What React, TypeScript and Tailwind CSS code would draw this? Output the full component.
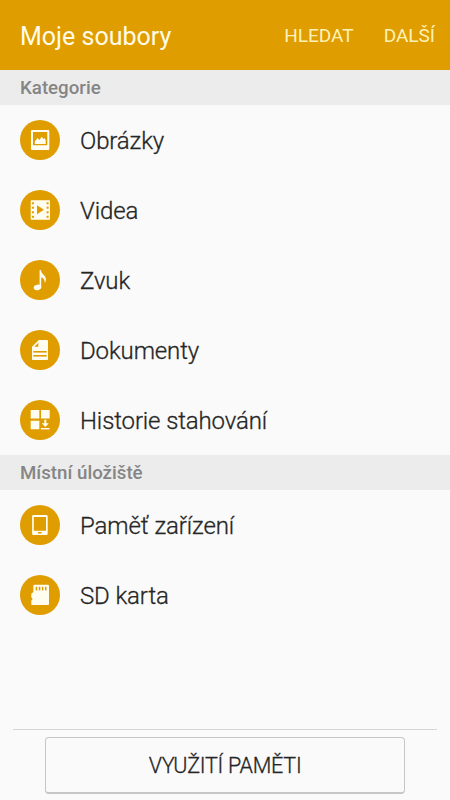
import type { ReactNode } from "react";

type Item = {
  label: string;
  icon: ReactNode;
};

const ORANGE = "#df9d00";

const categories: Item[] = [
  {
    label: "Obrázky",
    icon: (
      <>
        <path
          fillRule="evenodd"
          d="M12 10h16.3q1 0 1 1v18q0 1-1 1H12q-1 0-1-1V11q0-1 1-1zM13 12v13.2h14.3V12z"
        />
        <path d="M14.8 24v-2.5l2.8-3.4 1.8 1.9 2.3-3.2 1.7 2.2.9-1 1.4 2V24z" />
      </>
    ),
  },
  {
    label: "Videa",
    icon: (
      <>
        <rect x="10.7" y="10.3" width="19.3" height="19.4" rx=".8" />
        <g fill={ORANGE}>
          <path d="M17 15.3v9l7-4.5z" />
          {[12.3, 16.7, 21.3, 25.8].map((y) => (
            <g key={y}>
              <rect x="11.9" y={y} width="2" height="2" />
              <rect x="26.6" y={y} width="2" height="2" />
            </g>
          ))}
        </g>
      </>
    ),
  },
  {
    label: "Zvuk",
    icon: (
      <>
        <ellipse cx="17.5" cy="27.4" rx="3.8" ry="2.8" transform="rotate(-12 17.5 27.4)" />
        <path d="M19.6 10h1.3c.3 3 2.3 4.1 3.8 6 1.8 2.3 1.6 5-.1 7.3.6-3-.6-5.1-3.4-6.1v10.2h-1.6z" />
      </>
    ),
  },
  {
    label: "Dokumenty",
    icon: (
      <>
        <path d="M18.8 10H27q1 0 1 1v18q0 1-1 1H13q-1 0-1-1V16.8z" />
        <g fill={ORANGE}>
          <path d="M18.3 12.7v4h-4z" />
          <rect x="13.3" y="21" width="13.4" height="1.6" />
          <rect x="13.3" y="25" width="13.4" height="1.6" />
        </g>
      </>
    ),
  },
  {
    label: "Historie stahování",
    icon: (
      <>
        <rect x="10.7" y="10" width="8.6" height="8.5" rx=".6" />
        <rect x="21" y="10" width="8.7" height="8.5" rx=".6" />
        <rect x="10.7" y="20.7" width="8.6" height="8.6" rx=".6" />
        <path d="M24.3 19.8h2v3.4h2.5L25.3 27l-3.5-3.8h2.5z" />
        <rect x="20.9" y="28" width="8.7" height="1.4" />
      </>
    ),
  },
];

const storage: Item[] = [
  {
    label: "Paměť zařízení",
    icon: (
      <path
        fillRule="evenodd"
        d="M13.4 10h13q1.3 0 1.3 1.3v17.4q0 1.3-1.3 1.3h-13q-1.3 0-1.3-1.3V11.3q0-1.3 1.3-1.3zM13.8 12v13.8h12.2V12zM18 27v1.6h3.7V27z"
      />
    ),
  },
  {
    label: "SD karta",
    icon: (
      <>
        <path d="M14.6 9.8h13.4q1 0 1 1v18.2q0 1-1 1H12.3q-1 0-1-1v-3.5l1-.8v-1.5l-1-.6v-3.8l2.1-1.8v-6.2q0-1 1.2-1z" />
        <g fill={ORANGE}>
          <rect x="15.7" y="11.8" width="1.5" height="3.6" />
          <rect x="18.8" y="11.8" width="1.5" height="3.6" />
          <rect x="21.9" y="11.8" width="1.5" height="3.6" />
          <rect x="25" y="11.8" width="1.5" height="3.6" />
        </g>
      </>
    ),
  },
];

function Section({ title, items }: { title: string; items: Item[] }) {
  return (
    <section>
      <h2 className="h-[35px] bg-[#ececec] pl-5 text-[18.7px] font-medium leading-[36px] text-[#858585]">
        {title}
      </h2>
      <ul>
        {items.map((item) => (
          <li key={item.label} className="flex h-[70px] items-center gap-5 pl-5">
            <svg viewBox="0 0 40 40" className="size-10 shrink-0" fill="#fffdf0">
              <circle cx="20" cy="20" r="20" fill={ORANGE} />
              {item.icon}
            </svg>
            <span className="whitespace-nowrap pt-px text-[24px] font-light tracking-[-0.12px] text-[#262626] [-webkit-text-stroke:0.3px_#262626]">
              {item.label}
            </span>
          </li>
        ))}
      </ul>
    </section>
  );
}

export default function App() {
  return (
    <main className="flex h-[800px] w-[450px] flex-col overflow-hidden bg-[#fafafa] font-[Roboto,sans-serif]">
      <header className="flex h-[70px] shrink-0 items-center bg-[#df9d00] pl-5 pr-[15px]">
        <h1 className="flex-1 pt-[3px] text-[25px] text-[#fffbe6]">Moje soubory</h1>
        <nav className="flex gap-[30px] pt-[2px] text-[19px] text-[#fff2b8]">
          <button>HLEDAT</button>
          <button>DALŠÍ</button>
        </nav>
      </header>

      <Section title="Kategorie" items={categories} />
      <Section title="Místní úložiště" items={storage} />

      {/* Bottom action */}
      <footer className="mx-[13px] mt-auto h-[71px] border-t border-[#d6d6d6] px-8 pt-[7px]">
        <button className="h-[57px] w-full rounded-[4px] border border-b-2 border-[#c6c6c6] pt-[2px] text-[21.5px] font-light tracking-[-0.25px] text-[#262626] [-webkit-text-stroke:0.3px_#262626]">
          VYUŽITÍ PAMĚTI
        </button>
      </footer>
    </main>
  );
}
